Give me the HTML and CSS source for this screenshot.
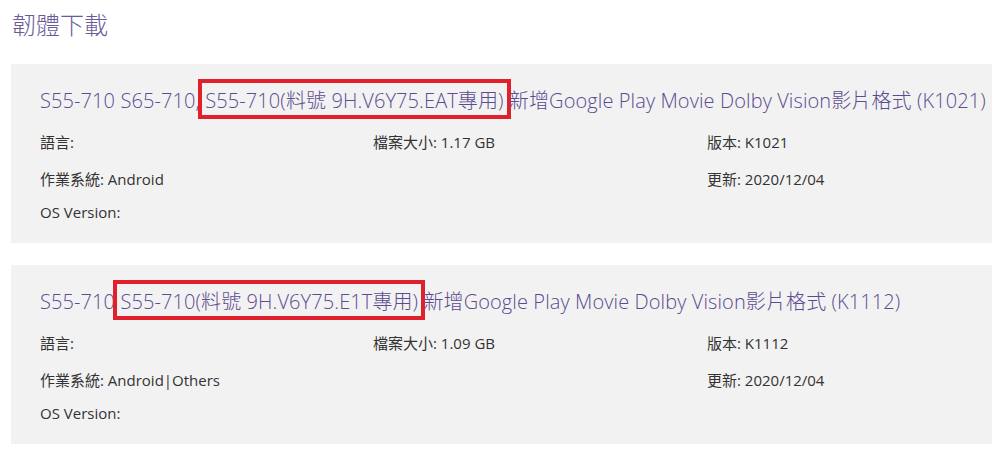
FILE: index.html
```html
<!DOCTYPE html>
<html lang="zh-Hant">

<head>
    <meta charset="UTF-8">
    <meta name="viewport" content="width=device-width, initial-scale=1.0">
    <title>韌體下載</title>
    <link rel="stylesheet" href="styles.css">
</head>

<body>
    <!-- 標題 -->
    <h2 class="page-title">韌體下載</h2>

    <!-- 下載清單 -->
    <div class="list">
        <div class="item">
            <div class="item-title">S55-710 S65-710, <span class="mark">S55-710(料號 9H.V6Y75.EAT專用)</span> 新增Google Play Movie Dolby Vision影片格式 (K1021)</div>
            <div class="info">
                <div class="cell">語言:</div>
                <div class="cell">檔案大小: 1.17 GB</div>
                <div class="cell">版本: K1021</div>
                <div class="cell">作業系統: Android</div>
                <div class="cell"></div>
                <div class="cell">更新: 2020/12/04</div>
                <div class="cell">OS Version:</div>
            </div>
        </div>
        <div class="item">
            <div class="item-title">S55-710 <span class="mark">S55-710(料號 9H.V6Y75.E1T專用)</span> 新增Google Play Movie Dolby Vision影片格式 (K1112)</div>
            <div class="info">
                <div class="cell">語言:</div>
                <div class="cell">檔案大小: 1.09 GB</div>
                <div class="cell">版本: K1112</div>
                <div class="cell">作業系統: Android|Others</div>
                <div class="cell"></div>
                <div class="cell">更新: 2020/12/04</div>
                <div class="cell">OS Version:</div>
            </div>
        </div>
    </div>
</body>

</html>
```

FILE: styles.css
```css
body {
    margin: 0;
    background: #fff;
    font-family: "Segoe UI", "Open Sans", "Noto Sans CJK TC", sans-serif;
}

.page-title {
    margin: 0;
    padding: 8px 0 0 12px;
    height: 64px;
    box-sizing: border-box;
    font-size: 24px;
    font-weight: 300;
    line-height: 34px;
    color: #6a5c99;
}

.list {
    display: flex;
    flex-direction: column;
    gap: 22px;
    padding-left: 11px;
}

.item {
    background: #f2f2f2;
    padding: 25px 0 0 29px;
    height: 179px;
    box-sizing: border-box;
}

.item-title {
    font-size: 20px;
    font-weight: 300;
    line-height: 24px;
    color: #5c4b8f;
    white-space: nowrap;
    letter-spacing: 0.1px;
}

/* 紅框標示 */
.item-title .mark {
    border: 4px solid #e0202a;
    padding: 4px 3px 1px;
    margin: 0 -7px;
}

.info {
    display: grid;
    grid-template-columns: 333px 334px 1fr;
    grid-template-rows: 37px 33px auto;
    margin-top: 19px;
    font-size: 15px;
    line-height: 20px;
    color: #333;
}
```
